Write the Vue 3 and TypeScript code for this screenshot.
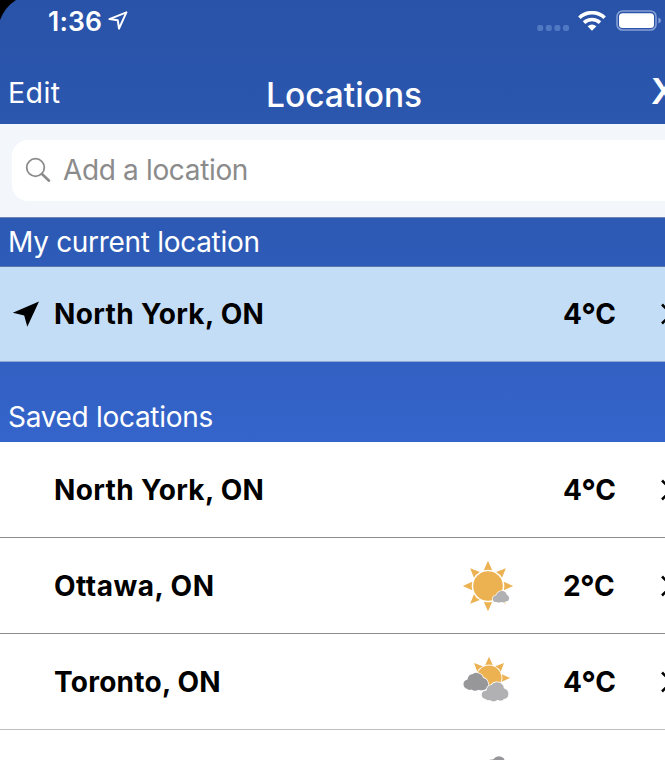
<script setup lang="ts">
interface Place {
  name: string
  degrees: number
  icon: 'none' | 'sunny' | 'cloudy'
  key: string
}

const saved: Place[] = [
  { key: 'north', name: 'North York, ON', degrees: 4, icon: 'none' },
  { key: 'ottawa', name: 'Ottawa, ON', degrees: 2, icon: 'sunny' },
  { key: 'toronto', name: 'Toronto, ON', degrees: 4, icon: 'cloudy' },
]

const rays = [0, 45, 90, 135, 180, 225, 270, 315]
const halfRays = [-45, 0, 45, 90]
</script>

<template>
  <div class="screen">
    <svg class="corner" viewBox="0 0 20 22"><path d="M0 0H16Q5 7 0 20Z" fill="#000" /></svg>
    <header class="top">
      <div class="status">
        <span class="clock">1:36</span>
        <svg class="loc" viewBox="0 0 22 22"><path d="M2.4 9.1 19.4 2.4 12 18.6 10.8 10.3Z" fill="none" stroke="#fff" stroke-width="2" stroke-linejoin="round" /></svg>
        <svg class="signal" viewBox="0 0 34 8">
          <rect v-for="n in 4" :key="n" :x="(n - 1) * 8.6 + 0.2" y="1" width="6" height="6" rx="2" fill="#5079c4" />
        </svg>
        <svg class="wifi" viewBox="0 0 28 21">
          <g fill="none" stroke="#fff" stroke-width="3.6">
            <path d="M1.4 6.7C8.2 0 19.8 0 26.6 6.7" />
            <path d="M6 11.6C10.4 7.5 17.6 7.5 22 11.6" />
          </g>
          <path d="M9.6 15.2Q14 11.7 18.4 15.2L14 19.7Z" fill="#fff" />
        </svg>
        <svg class="battery" viewBox="0 0 46 22">
          <rect x="1" y="1" width="39" height="19" rx="5.5" fill="none" stroke="#86a0d5" stroke-width="1.6" />
          <rect x="3" y="3.2" width="35" height="14.8" rx="3.5" fill="#fff" />
          <path d="M42.4 7.5Q45 8.5 45 10.5T42.4 13.6Z" fill="#86a0d5" />
        </svg>
      </div>
      <div class="nav">
        <span class="edit">Edit</span>
        <span class="title">Locations</span>
        <span class="close">X</span>
      </div>
    </header>

    <div class="search">
      <div class="field">
        <svg class="glass" viewBox="0 0 26 26">
          <circle cx="10.5" cy="10.5" r="8.8" fill="none" stroke="#8b8b8b" stroke-width="1.8" />
          <path d="M17 17 24 23.7" stroke="#8b8b8b" stroke-width="2.6" stroke-linecap="round" />
        </svg>
        <span class="hint">Add a location</span>
      </div>
    </div>

    <div class="section current"><span>My current location</span></div>
    <div class="row active">
      <svg class="arrow" viewBox="0 0 28 28"><path d="M.8 12.8 27 1.5 15.3 26.8 12.2 15.6Z" fill="#000" /></svg>
      <span class="name">North York, ON</span>
      <span class="temp">4<span class="degree">°</span>C</span>
      <svg class="chevron" viewBox="0 0 12 22"><path d="M1 1.5 10.5 11 1 20.5" fill="none" stroke="#000" stroke-width="2.6" /></svg>
    </div>
    <div class="section stored"><span>Saved locations</span></div>

    <div v-for="place in saved" :key="place.key" class="row" :class="place.key">
      <span class="name">{{ place.name }}</span>
      <svg v-if="place.icon === 'sunny'" class="weather" viewBox="0 0 52 52">
        <path v-for="a in rays" :key="a" d="M26 .8 30.2 10.3Q26 9 21.8 10.3Z" fill="#ecb251" :transform="`rotate(${a} 26 26)`" />
        <circle cx="26" cy="26" r="14.8" fill="#ecb251" />
        <path d="M34 42.1Q30.7 42 30.8 38.7 31 35.8 34 35.6 35.5 31.7 39.2 31.1 43.6 30.5 44.7 34.8 47.5 36.4 47 39 46.5 41.7 43.5 41.5 41.7 43 39.5 42 36.5 43 34 42.1Z" fill="#b1b1b3" stroke="#fff" stroke-width="1.4" paint-order="stroke" />
      </svg>
      <svg v-else-if="place.icon === 'cloudy'" class="weather" viewBox="0 0 52 52">
        <path v-for="a in halfRays" :key="a" d="M27 .8 30.8 9.2Q27 8 23.2 9.2Z" fill="#ecb251" :transform="`rotate(${a} 27 22)`" />
        <circle cx="27" cy="22" r="12.5" fill="#ecb251" />
        <path d="M5.4 33Q1.2 31.8 1.5 27.8 1.7 24.5 5.5 23.5 6.2 18.4 11 18 13.2 15.8 17 17.4 20.5 18.7 21 22 25.2 22.5 26 27 28 31.5 23 33.4 19.5 35 16.5 33.7 13 36 9.5 33.5 7.2 34.6 5.4 33Z" fill="#97979a" stroke="#fff" stroke-width="1.6" paint-order="stroke" />
        <path d="M24 43.2Q19.3 42 19.7 38.2 20.1 34.9 24.5 34.5 25 29.7 29.4 29 32 25.3 37 26.6 41.8 28.1 41.8 32.2 46.5 33.6 46.4 38 46.2 42.3 42 43.1 39.3 46 35.8 43.7 31.5 47 27.7 44 25.6 45 24 43.2Z" fill="#b1b1b3" stroke="#fff" stroke-width="1.6" paint-order="stroke" />
      </svg>
      <span class="temp">{{ place.degrees }}<span class="degree">°</span>C</span>
      <svg class="chevron" viewBox="0 0 12 22"><path d="M1 1.5 10.5 11 1 20.5" fill="none" stroke="#000" stroke-width="2.6" /></svg>
    </div>
    <div class="row partial">
      <svg class="weather" viewBox="0 0 52 52"><path d="M26 8.5Q28 7 31 7.5 36 2 41.5 6 43 8 43 12H26Z" fill="#97979a" /></svg>
    </div>
  </div>
</template>

<style>
body {
  margin: 0;
  overflow: hidden;
}
</style>

<style scoped>
.screen {
  position: relative;
  width: 665px;
  height: 760px;
  overflow: hidden;
  display: flex;
  flex-direction: column;
  font-family: Inter, "Liberation Sans", sans-serif;
  font-size: 28px;
  white-space: nowrap;
  color: #000;
  background: linear-gradient(#2953a8 0, #2d5ab5 240px, #3564cb 442px, #fff 442px);
}
.screen > * { flex-shrink: 0; }
svg { display: block; flex: none; }
.corner {
  position: absolute;
  left: 0;
  top: 0;
  width: 20px;
  height: 22px;
}
.top {
  box-sizing: border-box;
  height: 124px;
  color: #fff;
}
.status {
  display: flex;
  align-items: center;
  height: 42px;
  padding-left: 48px;
}
.clock {
  width: 59px;
  font-size: 26.5px;
  font-weight: 600;
  letter-spacing: 0.2px;
}
.loc { width: 22px; height: 22px; }
.signal { width: 34px; height: 8px; margin: 13px 0 0 408px; }
.wifi { width: 28px; height: 21px; margin-left: 7px; }
.battery { width: 46px; height: 22px; margin-left: 10px; }
.nav {
  display: grid;
  grid-template-columns: 258px 386px 40px;
  align-items: center;
  height: 82px;
  padding-left: 8px;
}
.edit { padding-top: 19px; font-size: 28.5px; letter-spacing: 0.4px; }
.title { font-size: 33.5px; font-weight: 500; padding-top: 24px; }
.close { font-size: 36px; font-weight: 600; padding-top: 16px; margin-left: -1px; }
.search {
  box-sizing: border-box;
  height: 93px;
  padding: 16px 0 16px 12px;
  background: #f3f7fb;
}
.field {
  display: flex;
  align-items: center;
  gap: 12px;
  height: 61px;
  box-sizing: border-box;
  padding: 0 0 2px 13px;
  border-radius: 16px 0 0 16px;
  background: #fff;
  color: #8b8b8b;
}
.glass { width: 26px; height: 26px; }
.hint { letter-spacing: -0.35px; }
.section {
  box-sizing: border-box;
  display: flex;
  align-items: center;
  padding-left: 8px;
  color: #fff;
  letter-spacing: -0.3px;
}
.current {
  height: 50px;
  border-top: 1px solid #7187b0;
  border-bottom: 1px solid #5977aa;
}
.stored {
  height: 80px;
  padding-top: 30px;
}
.row {
  box-sizing: border-box;
  display: grid;
  grid-template-columns: 54px 408px 101px 98px 12px;
  align-items: center;
  height: 96px;
  border-bottom: 1px solid #8d8d8f;
  background: #fff;
  font-weight: 700;
}
.active {
  height: 95px;
  background: #c3ddf7;
  border-bottom-color: #8ea8d3;
}
.toronto.row { border-bottom-color: #bfbfc1; }
.arrow { width: 28px; height: 28px; margin-left: 12px; }
.name { grid-column: 2; letter-spacing: 0.34px; }
.ottawa .name { letter-spacing: 0.5px; }
.toronto .name { letter-spacing: 0.25px; }
.weather { grid-column: 3; grid-row: 1; width: 52px; height: 52px; }
.temp { grid-column: 4; grid-row: 1; }
.degree { margin-left: -0.6px; font-size: 32px; line-height: 28px; vertical-align: -3px; letter-spacing: -0.8px; }
.chevron { grid-column: 5; grid-row: 1; width: 12px; height: 22px; }
.arrow, .name { grid-row: 1; }
.partial { border: 0; }
</style>
